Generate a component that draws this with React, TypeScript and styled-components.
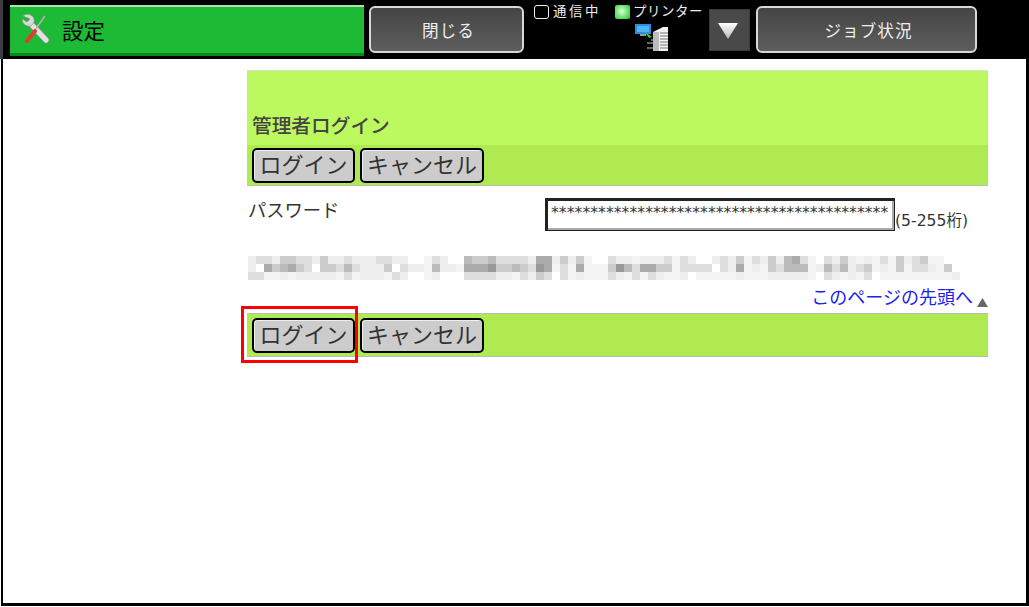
import styled, { createGlobalStyle } from 'styled-components';

const jp = `"DejaVu Sans", "Noto Sans CJK JP", sans-serif`;

const GlobalStyle = createGlobalStyle`
  html, body {
    margin: 0;
    padding: 0;
    background: #fff;
  }
  * {
    box-sizing: border-box;
  }
`;

// masked out sentence: 3 rows of 8px cells, one letter per cell (w = white, f = near white)
const mosaic = [
  'eddeccddeceedeeeddeewwfdewwbccbddddeaaececfww' + 'deefeeedfdewwedecfdecebadfwdecefefdfcedcffww',
  'ewacbacdwccdbdeeecwdeefbeefaaa9ccbcd9afdfafff' + 'c9bdaaccfddddwdeafefcdbbbfebdbedcfefcfddefcw',
  'ddffefeeeeefdfeeefdewwfewwwddddeefdecdwdfefff' + 'defdfdeffewfffffefffeeeeefwdefefdwfffffffffe',
];

const cellColor = (c: string) => {
  if (c === 'w') return '#ffffff';
  if (c === 'f') return '#f4f4f4';
  return `#${c}${c}${c}`;
};

const Wrench = () => (
  <svg width="30" height="32" viewBox="0 0 30 32">
    <path d="M10 11 L25 27" stroke="#8a8a8a" strokeWidth="6.4" strokeLinecap="round" />
    <path d="M10 11 L25 27" stroke="#e2e2e2" strokeWidth="5.2" strokeLinecap="round" />
    <path d="M2 3 C5 0 12 1 13 6 C13.5 8 13 9 12.5 10 L10 13 C8 13.5 5 13 3 11 C1.5 9.5 1 7.5 1.5 6 L6 9 L9 6 Z" fill="#d8d8d8" stroke="#8a8a8a" strokeWidth="0.6" />
    <path d="M24 3 L14 17" stroke="#b5b5b5" strokeWidth="1.4" />
    <path d="M14 18 L6 28" stroke="#e23c28" strokeWidth="4" strokeLinecap="round" />
  </svg>
);

const PrinterIcon = () => (
  <svg width="34" height="28" viewBox="0 0 34 28">
    <rect x="0" y="0" width="16" height="10" fill="#2a8de0" />
    <rect x="2" y="2" width="12" height="6" fill="#4fb4f4" />
    <rect x="5" y="10" width="6" height="2" fill="#999" />
    <path d="M9 7 L17 13 L14 14 Z" fill="#34d04a" />
    <path d="M16 16h6M12 19h8M12 24h8" stroke="#888" strokeWidth="1.4" />
    <path d="M18 8 L28 3 L33 3 L33 27 L18 27 Z" fill="#f2f2f2" />
    <rect x="18" y="8" width="6" height="19" fill="#bcbcbc" />
    <path d="M25 9h8M25 12h8M25 15h8M25 18h8M25 21h8M25 24h8" stroke="#777" strokeWidth="1" />
  </svg>
);

const App = () => {
  return (
    <Screen>
      <GlobalStyle />
      <TopBar>
        <TitleTab>
          <Wrench />
          <TitleText>設定</TitleText>
        </TitleTab>
        <DarkButton $width={155}>閉じる</DarkButton>
        <StatusArea>
          <StatusItem>
            <CheckBox />
            <StatusText $spacing={2.6}>通信中</StatusText>
          </StatusItem>
          <PrinterColumn>
            <StatusItem>
              <Led />
              <StatusText $spacing={0.6}>プリンター</StatusText>
            </StatusItem>
            <PrinterIcon />
          </PrinterColumn>
        </StatusArea>
        <DropButton>
          <svg width="20" height="16" viewBox="0 0 20 16">
            <defs>
              <linearGradient id="tri" x1="0" y1="0" x2="0" y2="1">
                <stop offset="0" stopColor="#ffffff" />
                <stop offset="1" stopColor="#b8b8b8" />
              </linearGradient>
            </defs>
            <path d="M0 0 H20 L10 16 Z" fill="url(#tri)" />
          </svg>
        </DropButton>
        <DarkButton $width={221}>ジョブ状況</DarkButton>
      </TopBar>
      <Body>
        <Content>
          <HeaderBlock>
            <PageTitle>管理者ログイン</PageTitle>
          </HeaderBlock>
          <ButtonBar>
            <FormButton $width={103}>ログイン</FormButton>
            <FormButton $width={124}>キャンセル</FormButton>
          </ButtonBar>
          <FieldRow>
            <FieldLabel>パスワード</FieldLabel>
            <PasswordBox>*******************************************</PasswordBox>
            <FieldHint>(5-255桁)</FieldHint>
          </FieldRow>
          <Mosaic width="712" height="24" viewBox="0 0 712 24">
            {mosaic.map((row, y) =>
              row.split('').map((c, x) => (
                <rect key={`${x}-${y}`} x={x * 8} y={y * 8} width="8" height="8" fill={cellColor(c)} />
              )),
            )}
          </Mosaic>
          <TopLinkRow>
            <TopLink>このページの先頭へ</TopLink>
            <svg width="11" height="9" viewBox="0 0 11 9">
              <path d="M5.5 0 L11 9 H0 Z" fill="#666" />
            </svg>
          </TopLinkRow>
          <BottomBar>
            <Highlighted>
              <FormButton $width={103}>ログイン</FormButton>
            </Highlighted>
            <FormButton $width={124}>キャンセル</FormButton>
          </BottomBar>
        </Content>
      </Body>
    </Screen>
  );
};

const Screen = styled.div`
  display: flex;
  flex-direction: column;
  width: 1029px;
  height: 607px;
  background: #fff;
  overflow: hidden;
  font-family: ${jp};
`;

const TopBar = styled.div`
  display: flex;
  align-items: flex-start;
  height: 59px;
  padding: 5px 0 0 7px;
  background: #000;
  border-left: 3px solid #3c3c44;
`;

const TitleTab = styled.div`
  display: flex;
  align-items: center;
  gap: 11px;
  width: 354px;
  height: 51px;
  padding: 0 0 2px 11px;
  background: #1dba35;
  border-top: 2px solid #a9e4b0;
  border-bottom: 3px solid #0c8a18;
`;

const TitleText = styled.span`
  font-size: 21.5px;
  color: #000;
`;

const DarkButton = styled.div<{ $width: number }>`
  display: flex;
  align-items: center;
  justify-content: center;
  width: ${({ $width }) => $width}px;
  height: 47px;
  margin-top: 1px;
  margin-left: 5px;
  padding-left: 4px;
  border: 2px solid #d8d8d8;
  border-radius: 6px;
  background: linear-gradient(#444, #5e5e5e);
  color: #eee;
  font-size: 16.6px;
  letter-spacing: 1px;
`;

const StatusArea = styled.div`
  display: flex;
  gap: 14px;
  width: 185px;
  margin-left: 10px;
`;

const StatusItem = styled.div`
  display: flex;
  align-items: center;
  gap: 4px;
  height: 14px;
`;

const StatusText = styled.span<{ $spacing: number }>`
  font-size: 13.4px;
  line-height: 14px;
  letter-spacing: ${({ $spacing }) => $spacing}px;
  color: #eee;
`;

const CheckBox = styled.span`
  width: 15px;
  height: 14px;
  border: 1px solid #eee;
  border-radius: 3px;
`;

const Led = styled.span`
  width: 15px;
  height: 14px;
  margin-right: -1px;
  border-radius: 2px;
  background: radial-gradient(circle at 45% 45%, #e4ffe4 0%, #7de87d 45%, #22c822 100%);
`;

const PrinterColumn = styled.div`
  display: flex;
  flex-direction: column;
  gap: 5px;
  & > svg {
    margin-left: 20px;
  }
`;

const DropButton = styled.div`
  display: flex;
  align-items: center;
  justify-content: center;
  width: 41px;
  height: 42px;
  margin: 4px 1px 0 -10px;
  padding: 2px 3px 0 0;
  border: 1px solid #3a3a3a;
  background: #494949;
`;

const Body = styled.div`
  flex: 1;
  margin: 0 0 1px 1px;
  padding: 11px 0 0 244px;
  background: #fff;
  border-left: 2px solid #000;
  border-right: 3px solid #000;
  border-bottom: 3px solid #000;
`;

const Content = styled.div`
  display: flex;
  flex-direction: column;
  width: 741px;
`;

const HeaderBlock = styled.div`
  display: flex;
  align-items: flex-end;
  height: 75px;
  padding: 0 0 5px 5px;
  background: #bcf95e;
  border-top: 1px solid #ddd;
`;

const PageTitle = styled.h1`
  margin: 0;
  font-size: 19.7px;
  font-weight: 500;
  line-height: 26px;
  color: #444;
`;

const ButtonBar = styled.div`
  display: flex;
  align-items: flex-start;
  gap: 5px;
  height: 41px;
  padding: 3px 0 0 5px;
  background: #aeea50;
  border-bottom: 1px solid #bbb;
`;

const BottomBar = styled(ButtonBar)`
  height: 44px;
  padding-top: 4px;
  border-top: 1px solid #bbb;
`;

const FormButton = styled.button<{ $width: number }>`
  width: ${({ $width }) => $width}px;
  height: 35px;
  padding: 0;
  border: 2px solid #000;
  border-radius: 5px;
  background: #ccc;
  box-shadow: inset 1px 1px 0 #eee;
  color: #333;
  font-family: ${jp};
  font-size: 22px;
  line-height: 28px;
`;

const Highlighted = styled.div`
  position: relative;
  &::after {
    content: '';
    position: absolute;
    inset: -12px -3px -10px -11px;
    border: 3px solid #f00;
    pointer-events: none;
  }
`;

const FieldRow = styled.div`
  display: flex;
  align-items: flex-start;
  height: 70px;
  padding: 12px 0 0 1px;
`;

const FieldLabel = styled.span`
  width: 297px;
  margin-top: 2px;
  font-size: 18.3px;
  line-height: 22px;
  color: #333;
`;

const PasswordBox = styled.div`
  width: 350px;
  height: 33px;
  padding: 3px 0 0 5px;
  border: 1px solid #222;
  box-shadow: inset 2px 2px 0 #222, inset -2px -2px 0 #aaa;
  font-size: 15.7px;
  line-height: 22px;
  white-space: nowrap;
  overflow: hidden;
  color: #333;
`;

const FieldHint = styled.span`
  margin-top: 12px;
  font-size: 15.6px;
  line-height: 22px;
  color: #333;
`;

const Mosaic = styled.svg`
  display: block;
  margin-left: 1px;
`;

const TopLinkRow = styled.div`
  display: flex;
  align-items: flex-end;
  justify-content: flex-end;
  gap: 4px;
  height: 33px;
  padding-bottom: 4px;
  & > svg {
    margin-bottom: 2px;
  }
`;

const TopLink = styled.a`
  font-size: 18px;
  line-height: 22px;
  color: #2222ee;
`;

export default App;
